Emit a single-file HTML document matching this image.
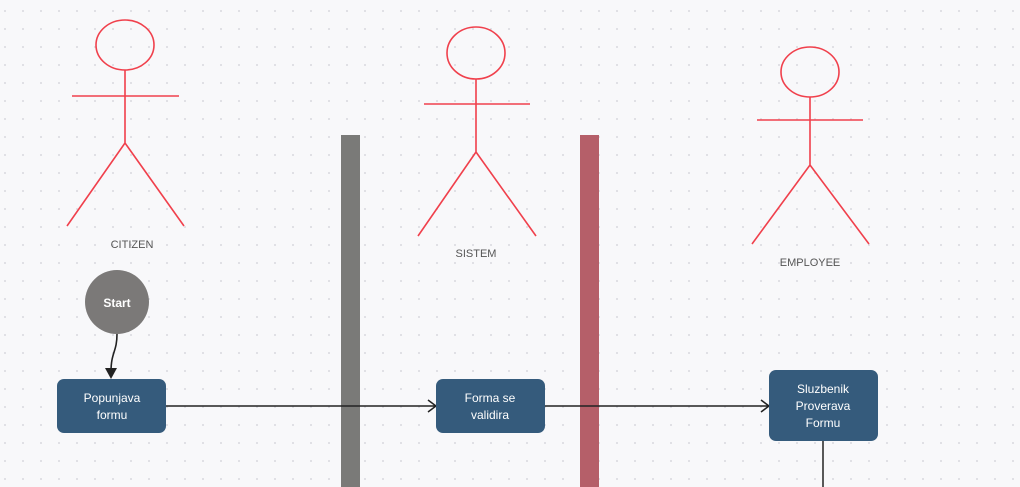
<!DOCTYPE html>
<html><head><style>
html,body{margin:0;padding:0;width:1020px;height:487px;overflow:hidden;background:#f8f8fa;}
svg{display:block}
text{font-family:"Liberation Sans",sans-serif;}
</style></head><body>
<svg width="1020" height="487" xmlns="http://www.w3.org/2000/svg">
<defs>
<pattern id="g" x="4" y="10" width="18" height="18" patternUnits="userSpaceOnUse">
<circle cx="1" cy="1" r="1" fill="#d9d9de"/>
</pattern>
</defs>
<rect width="1020" height="487" fill="#f8f8fa"/>
<rect width="1020" height="487" fill="url(#g)"/>
<g fill="none" stroke="#f0404c" stroke-width="1.6">
<ellipse cx="125" cy="45" rx="29" ry="25"/>
<path d="M72 96H179M125 70V143M125 143L67 226M125 143L184 226"/>
<ellipse cx="476" cy="53" rx="29" ry="26"/>
<path d="M424 104H530M476 79V152M476 152L418 236M476 152L536 236"/>
<ellipse cx="810" cy="72" rx="29" ry="25"/>
<path d="M757 120H863M810 97V165M810 165L752 244M810 165L869 244"/>
</g>
<g font-size="11" fill="#555" text-anchor="middle">
<text x="132" y="248">CITIZEN</text>
<text x="476" y="257">SISTEM</text>
<text x="810" y="266">EMPLOYEE</text>
</g>
<rect x="341" y="135" width="19" height="352" fill="#7a7a78"/>
<rect x="580" y="135" width="19" height="352" fill="#b55f69"/>
<circle cx="117" cy="302" r="32" fill="#7b7978"/>
<text x="117" y="307" font-size="12" font-weight="bold" fill="#fff" text-anchor="middle">Start</text>
<path d="M117 334C117 352 111 352 111 372" stroke="#222" stroke-width="1.6" fill="none"/>
<path d="M105 368L117 368L111 379Z" fill="#222"/>
<g stroke="#222" stroke-width="1.5" fill="none">
<path d="M166 406H437M428 400L436 406L428 412"/>
<path d="M545 406H770M761 400L769 406L761 412"/>
<path d="M823 441V487"/>
</g>
<g fill="#355b7c">
<rect x="57" y="379" width="109" height="54" rx="7"/>
<rect x="436" y="379" width="109" height="54" rx="7"/>
<rect x="769" y="370" width="109" height="71" rx="7"/>
</g>
<g font-size="12" fill="#fff" text-anchor="middle">
<text x="112" y="402">Popunjava</text><text x="112" y="419">formu</text>
<text x="490" y="402">Forma se</text><text x="490" y="419">validira</text>
<text x="823" y="393">Sluzbenik</text><text x="823" y="410">Proverava</text><text x="823" y="427">Formu</text>
</g>
</svg>
</body></html>
